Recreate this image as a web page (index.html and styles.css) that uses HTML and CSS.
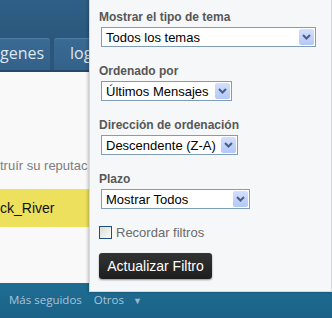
FILE: index.html
```html
<!DOCTYPE html>
<html lang="es">
<head>
    <meta charset="UTF-8">
    <meta name="viewport" content="width=device-width, initial-scale=1.0">
    <title>Filtro de temas</title>
    <link rel="stylesheet" href="styles.css">
</head>
<body>
<div class="page">
    <div class="header"></div>
    <div class="tabs">
        <div class="tab tab-first">genes</div>
        <div class="tab">log</div>
    </div>
    <div class="content">
        <p class="intro">truír su reputac</p>
        <div class="user-bar">ck_River</div>
    </div>
    <div class="footer-nav">
        <span>Más seguidos</span>
        <span>Otros <span class="caret">&#9660;</span></span>
    </div>

    <div class="filter-popup">
        <div class="field">
            <label>Mostrar el tipo de tema</label>
            <div class="select select-wide">
                <span>Todos los temas</span>
                <span class="select-btn"><svg width="9" height="6" viewBox="0 0 9 6"><path d="M1 1 L4.5 4.5 L8 1" fill="none" stroke="#4a5f86" stroke-width="2"/></svg></span>
            </div>
        </div>
        <div class="field">
            <label>Ordenado por</label>
            <div class="select select-order">
                <span>Últimos Mensajes</span>
                <span class="select-btn"><svg width="9" height="6" viewBox="0 0 9 6"><path d="M1 1 L4.5 4.5 L8 1" fill="none" stroke="#4a5f86" stroke-width="2"/></svg></span>
            </div>
        </div>
        <div class="field">
            <label>Dirección de ordenación</label>
            <div class="select select-dir">
                <span>Descendente (Z-A)</span>
                <span class="select-btn"><svg width="9" height="6" viewBox="0 0 9 6"><path d="M1 1 L4.5 4.5 L8 1" fill="none" stroke="#4a5f86" stroke-width="2"/></svg></span>
            </div>
        </div>
        <div class="field">
            <label>Plazo</label>
            <div class="select select-time">
                <span>Mostrar Todos</span>
                <span class="select-btn"><svg width="9" height="6" viewBox="0 0 9 6"><path d="M1 1 L4.5 4.5 L8 1" fill="none" stroke="#4a5f86" stroke-width="2"/></svg></span>
            </div>
        </div>
        <div class="remember">
            <span class="checkbox"></span>
            <span>Recordar filtros</span>
        </div>
        <button class="btn-update">Actualizar Filtro</button>
    </div>
</div>
</body>
</html>
```

FILE: styles.css
```css
body {
    margin: 0;
    font-family: "Liberation Sans", Arial, sans-serif;
    background-color: #f8f8f8;
}
.page {
    position: relative;
    width: 332px;
    height: 318px;
    overflow: hidden;
    display: flex;
    flex-direction: column;
}
.header {
    height: 38px;
    background: linear-gradient(#2f5f86, #2b587c);
}
.tabs {
    height: 32px;
    display: flex;
    gap: 4px;
    background-color: #2a5679;
    border-bottom: 2px solid #24496a;
}
.tab {
    height: 32px;
    line-height: 31px;
    padding: 0 16px;
    font-family: "Open Sans", sans-serif;
    font-size: 16px;
    color: #dde6ee;
    background: linear-gradient(#3a6b93, #33618a);
    border-radius: 3px 3px 0 0;
    box-shadow: inset 0 1px 0 #4d7ea6;
}
.tab-first {
    padding-left: 0;
    width: 34px;
    border-radius: 0 3px 0 0;
}
.content {
    flex: 1;
    background-color: #f9f9f9;
    padding-top: 86px;
}
.intro {
    margin: 0;
    font-size: 13px;
    color: #7d7d7d;
    white-space: nowrap;
}
.user-bar {
    margin-top: 16px;
    height: 38px;
    line-height: 38px;
    width: 100px;
    background-color: #ece05c;
    font-size: 14px;
    color: #111;
}
.footer-nav {
    height: 35px;
    background: linear-gradient(#1f6d93, #1b6287);
    display: flex;
    gap: 12px;
    padding: 9px 0 0 9px;
    box-sizing: border-box;
    font-family: "Open Sans", sans-serif;
    font-size: 11.5px;
    color: #a9c5d8;
}
.caret {
    font-size: 9px;
    margin-left: 6px;
    color: #9bb9cf;
}

/* popup */
.filter-popup {
    position: absolute;
    left: 89px;
    top: -1px;
    width: 232px;
    height: 282px;
    padding: 9px 0 0 9px;
    background-color: #f5f7f9;
    border: 1px solid #d3d9df;
    box-shadow: -1px 0 3px rgba(0, 0, 0, 0.25);
}
.field {
    margin-bottom: 16px;
}
.field label {
    display: block;
    font-size: 12px;
    line-height: 16px;
    font-weight: bold;
    color: #575757;
    margin-bottom: 2px;
}
.select {
    margin-left: 2px;
    height: 20px;
    box-sizing: border-box;
    border: 1px solid #7f9db9;
    background: #fff;
    display: flex;
    align-items: center;
    justify-content: space-between;
    padding: 0 1px 0 4px;
    font-size: 13px;
    color: #000;
}
.select-wide { width: 215px; }
.select-order { width: 131px; }
.select-dir { width: 137px; }
.select-time { width: 149px; }
.select-btn {
    width: 15px;
    height: 16px;
    border-radius: 2px;
    background: linear-gradient(#d3e0fd, #b4c8f6);
    display: flex;
    align-items: center;
    justify-content: center;
}
.remember {
    display: flex;
    align-items: center;
    gap: 4px;
    font-size: 13px;
    color: #6a6a6a;
    margin-top: 2px;
}
.checkbox {
    width: 11px;
    height: 11px;
    border: 1px solid #1c5180;
    background: linear-gradient(135deg, #dcdcd6, #fbfbf9);
}
.btn-update {
    margin-top: 13px;
    width: 113px;
    height: 26px;
    border: none;
    border-radius: 3px;
    background: linear-gradient(#333, #1e1e1e);
    box-shadow: 0 1px 2px rgba(0, 0, 0, 0.4);
    font-family: "Liberation Sans", Arial, sans-serif;
    font-size: 14px;
    color: #fff;
    padding: 0;
}
```
